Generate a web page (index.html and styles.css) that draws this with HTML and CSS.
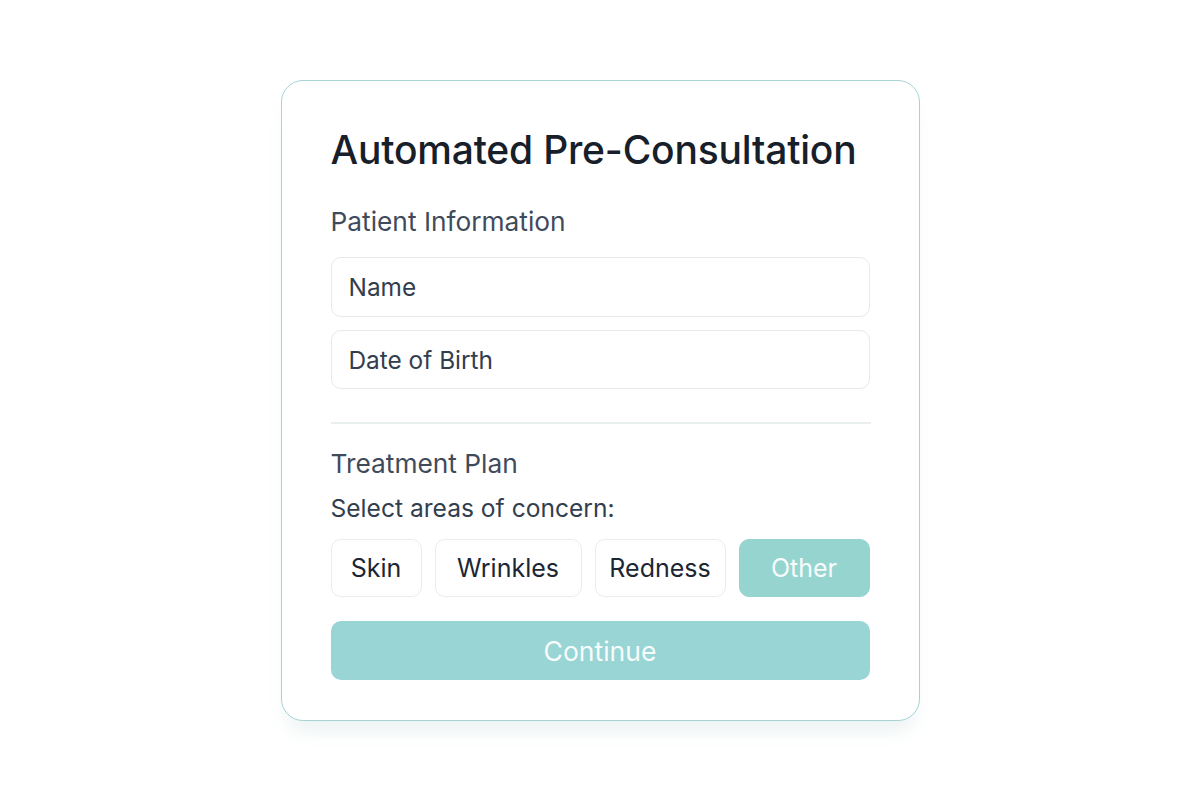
FILE: index.html
```html
<!DOCTYPE html>
<html lang="en">
<head>
<meta charset="utf-8">
<title>Automated Pre-Consultation</title>
<link rel="stylesheet" href="styles.css">
</head>
<body>
<main class="page">
  <section class="card">
    <h1 class="title">Automated Pre-Consultation</h1>
    <h2 class="section-title">Patient Information</h2>
    <div class="field">Name</div>
    <div class="field field-second">Date of Birth</div>
    <hr class="divider">
    <h2 class="section-title section-title-plan">Treatment Plan</h2>
    <p class="prompt">Select areas of concern:</p>
    <div class="chips">
      <button class="chip chip-skin">Skin</button>
      <button class="chip chip-wrinkles">Wrinkles</button>
      <button class="chip chip-redness">Redness</button>
      <button class="chip chip-active">Other</button>
    </div>
    <button class="continue">Continue</button>
  </section>
</main>
</body>
</html>
```

FILE: styles.css
```css
* { box-sizing: border-box; }
html, body { margin: 0; padding: 0; background: #ffffff; }
body { font-family: Inter, "Noto Sans", sans-serif; color: #1f2933; }
.page {
  width: 1200px;
  height: 800px;
  display: flex;
  justify-content: center;
  padding-top: 80px;
}
.card {
  width: 639px;
  height: 641px;
  border: 1.5px solid #a8d3d5;
  border-radius: 22px;
  background: #fff;
  padding: 44px 49px 0 49px;
  display: flex;
  flex-direction: column;
  box-shadow: 0 16px 20px -8px rgba(120, 160, 170, 0.16);
}
.title {
  margin: 0;
  font-size: 39px;
  font-weight: 500;
  line-height: 50px;
  color: #17202a;
  letter-spacing: -0.2px;
}
.section-title {
  margin: 32px 0 0 0;
  font-size: 26.3px;
  font-weight: 400;
  line-height: 30px;
  color: #3f4b5b;
}
.field {
  margin-top: 20px;
  height: 60px;
  border: 1.5px solid #e6eaec;
  border-radius: 10px;
  padding: 0 17px;
  display: flex;
  align-items: center;
  font-size: 24.4px;
  color: #323e4d;
}
.field-second { margin-top: 13px; height: 59px; }
.divider {
  margin: 33px 0 0 0;
  border: 0;
  border-top: 2px solid #e9eeef;
  width: 540px;
}
.section-title-plan { margin-top: 25px; }
.prompt {
  margin: 14px 0 0 0;
  font-size: 24.6px;
  line-height: 30px;
  color: #323e4d;
}
.chips {
  display: flex;
  gap: 13px;
  margin-top: 16px;
}
.chip {
  height: 58px;
  border: 1px solid #e9eded;
  border-radius: 10px;
  background: #fff;
  font-family: Inter, "Noto Sans", sans-serif;
  font-size: 25px;
  color: #1c2634;
  padding: 0;
}
.chip-skin { width: 91px; }
.chip-wrinkles { width: 147px; }
.chip-redness { width: 131px; }
.chip-active {
  width: 131px;
  background: #96d4d0;
  border-color: #96d4d0;
  color: #f6fcfc;
}
.continue {
  margin-top: 24px;
  height: 59px;
  width: 539px;
  border: 0;
  border-radius: 10px;
  background: #99d5d4;
  color: #f7fcfc;
  font-family: Inter, "Noto Sans", sans-serif;
  font-size: 26.5px;
}
```
